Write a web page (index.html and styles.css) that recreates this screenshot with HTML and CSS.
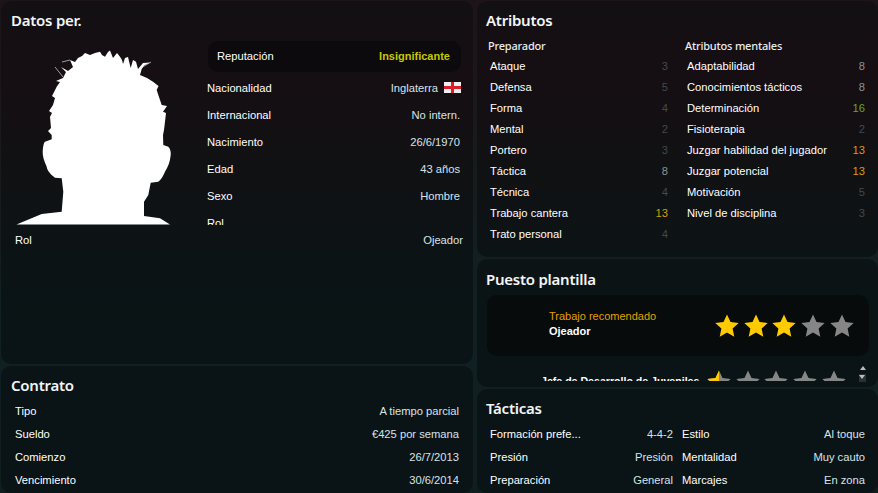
FILE: index.html
```html
<!DOCTYPE html>
<html lang="es">
<head>
  <meta charset="UTF-8" />
  <title>Perfil del empleado</title>
  <link rel="stylesheet" href="styles.css">
</head>
<body>
  <div class="column column-left">
    <section class="panel panel-personal">
      <h2>Datos per.</h2>
      <div class="personal-body">
        <svg class="silhouette" viewBox="10 44 170 181" aria-hidden="true">
          <path fill="#fff" d="M16.5 224.5 L41.7 214 L61.7 211.7 L63.3 191.7 L61.7 178.3 L55 177.7 C50 174 47 170 46.7 166.7 C44 161 42.5 156 42.7 151.7 C43 146 44 142 45 141.7 L51.7 139.3 L51.7 135 L48 131 L51 128 L50 116.7 L52 113 L49 111 L53 105 L55 98 L52 96 L56.7 86.7 L60 82 L56 81 L63 78 L66 72 L61 67 L68 71 L73 67 L70 60 L75 62 L78 58 L82 56 L85 53 L90 55 L95 53 L100 51.7 L102 55 L105 56.7 L108 52 L110 50.5 L113 58 L117 53 L120 56.7 L122 60 L123 64 L125 58 L128 57 L130.7 68 L133 60 L136 61.7 L138 69 L143 63 L150 62.5 L144 65.5 L141.7 69 L140 75 L147 78 L153 81.7 L158.5 86 L156.7 90 L159 97 L161.7 105 L167 106 L163 111.7 L166 113 L165 121.7 L164 130 L163 135 L163.3 145 L168.3 146.7 C170.5 149 171 152 170.7 155 C170 162 168 167 165 171.7 C163 176 161 180 158.3 181.7 L150.7 182.7 L148.3 195 L144 201.7 L144 216 L160 218.3 L170 224.5 Z"/>
          <path fill="none" stroke="#fff" stroke-width=".6" d="M63 77 L55 67 M70 60 L62 62 M141 68 L151 62"/>
        </svg>
        <div class="personal-list">
          <div class="row row-highlight"><span>Reputación</span><b class="rep">Insignificante</b></div>
          <div class="row"><span>Nacionalidad</span><span class="val nation">Inglaterra
            <svg class="flag" viewBox="0 0 17 11" aria-hidden="true">
              <rect width="17" height="11" fill="#eee"/>
              <rect x="7" width="3" height="11" fill="#d8202c"/>
              <rect y="4" width="17" height="3" fill="#d8202c"/>
            </svg></span></div>
          <div class="row"><span>Internacional</span><span class="val">No intern.</span></div>
          <div class="row"><span>Nacimiento</span><span class="val">26/6/1970</span></div>
          <div class="row"><span>Edad</span><span class="val">43 años</span></div>
          <div class="row"><span>Sexo</span><span class="val">Hombre</span></div>
          <div class="row"><span>Rol</span></div>
        </div>
      </div>
      <div class="row row-role"><span>Rol</span><span class="val">Ojeador</span></div>
    </section>

    <section class="panel panel-contract">
      <h2>Contrato</h2>
      <div class="row"><span>Tipo</span><span class="val">A tiempo parcial</span></div>
      <div class="row"><span>Sueldo</span><span class="val">€425 por semana</span></div>
      <div class="row"><span>Comienzo</span><span class="val">26/7/2013</span></div>
      <div class="row"><span>Vencimiento</span><span class="val">30/6/2014</span></div>
    </section>
  </div>

  <div class="column column-right">
    <section class="panel panel-attrs">
      <h2>Atributos</h2>
      <div class="attrs">
        <div class="attr-col">
          <h3>Preparador</h3>
          <div class="row"><span>Ataque</span><span class="low">3</span></div>
          <div class="row"><span>Defensa</span><span class="low">5</span></div>
          <div class="row"><span>Forma</span><span class="low">4</span></div>
          <div class="row"><span>Mental</span><span class="low">2</span></div>
          <div class="row"><span>Portero</span><span class="low">3</span></div>
          <div class="row"><span>Táctica</span><span class="mid">8</span></div>
          <div class="row"><span>Técnica</span><span class="low">4</span></div>
          <div class="row"><span>Trabajo cantera</span><span class="good">13</span></div>
          <div class="row"><span>Trato personal</span><span class="low">4</span></div>
        </div>
        <div class="attr-col">
          <h3>Atributos mentales</h3>
          <div class="row"><span>Adaptabilidad</span><span class="mid">8</span></div>
          <div class="row"><span>Conocimientos tácticos</span><span class="mid">8</span></div>
          <div class="row"><span>Determinación</span><span class="great">16</span></div>
          <div class="row"><span>Fisioterapia</span><span class="low">2</span></div>
          <div class="row"><span>Juzgar habilidad del jugador</span><span class="good">13</span></div>
          <div class="row"><span>Juzgar potencial</span><span class="good">13</span></div>
          <div class="row"><span>Motivación</span><span class="low">5</span></div>
          <div class="row"><span>Nivel de disciplina</span><span class="low">3</span></div>
        </div>
      </div>
    </section>

    <section class="panel panel-squad">
      <h2>Puesto plantilla</h2>
      <div class="job-card">
        <div class="job-text">
          <div class="job-label">Trabajo recomendado</div>
          <div class="job-name">Ojeador</div>
        </div>
        <div class="stars">
          <svg class="star on" viewBox="0 0 24 24"><path d="M12 .5l3.5 7.6 8.2.9-6.1 5.6 1.7 8.1-7.3-4.1-7.3 4.1 1.7-8.1L.3 9l8.2-.9z"/></svg>
          <svg class="star on" viewBox="0 0 24 24"><path d="M12 .5l3.5 7.6 8.2.9-6.1 5.6 1.7 8.1-7.3-4.1-7.3 4.1 1.7-8.1L.3 9l8.2-.9z"/></svg>
          <svg class="star on" viewBox="0 0 24 24"><path d="M12 .5l3.5 7.6 8.2.9-6.1 5.6 1.7 8.1-7.3-4.1-7.3 4.1 1.7-8.1L.3 9l8.2-.9z"/></svg>
          <svg class="star" viewBox="0 0 24 24"><path d="M12 .5l3.5 7.6 8.2.9-6.1 5.6 1.7 8.1-7.3-4.1-7.3 4.1 1.7-8.1L.3 9l8.2-.9z"/></svg>
          <svg class="star" viewBox="0 0 24 24"><path d="M12 .5l3.5 7.6 8.2.9-6.1 5.6 1.7 8.1-7.3-4.1-7.3 4.1 1.7-8.1L.3 9l8.2-.9z"/></svg>
        </div>
      </div>
      <div class="job-more">
        <div class="job-clip">
          <div class="job-other">Jefe de Desarrollo de Juveniles</div>
          <div class="stars">
            <svg class="star" viewBox="0 0 24 24"><path d="M12 .5l3.5 7.6 8.2.9-6.1 5.6 1.7 8.1-7.3-4.1-7.3 4.1 1.7-8.1L.3 9l8.2-.9z"/><path class="half-fill" d="M12 .5v17.6l-7.3 4.1 1.7-8.1L.3 9l8.2-.9z"/></svg>
            <svg class="star" viewBox="0 0 24 24"><path d="M12 .5l3.5 7.6 8.2.9-6.1 5.6 1.7 8.1-7.3-4.1-7.3 4.1 1.7-8.1L.3 9l8.2-.9z"/></svg>
            <svg class="star" viewBox="0 0 24 24"><path d="M12 .5l3.5 7.6 8.2.9-6.1 5.6 1.7 8.1-7.3-4.1-7.3 4.1 1.7-8.1L.3 9l8.2-.9z"/></svg>
            <svg class="star" viewBox="0 0 24 24"><path d="M12 .5l3.5 7.6 8.2.9-6.1 5.6 1.7 8.1-7.3-4.1-7.3 4.1 1.7-8.1L.3 9l8.2-.9z"/></svg>
            <svg class="star" viewBox="0 0 24 24"><path d="M12 .5l3.5 7.6 8.2.9-6.1 5.6 1.7 8.1-7.3-4.1-7.3 4.1 1.7-8.1L.3 9l8.2-.9z"/></svg>
          </div>
        </div>
        <div class="scroller"><i class="arrow-up"></i><i class="arrow-down"></i></div>
      </div>
    </section>

    <section class="panel panel-tactics">
      <h2>Tácticas</h2>
      <div class="tactics">
        <div class="row"><span>Formación prefe...</span><span class="val">4-4-2</span></div>
        <div class="row"><span>Estilo</span><span class="val">Al toque</span></div>
        <div class="row"><span>Presión</span><span class="val">Presión</span></div>
        <div class="row"><span>Mentalidad</span><span class="val">Muy cauto</span></div>
        <div class="row"><span>Preparación</span><span class="val">General</span></div>
        <div class="row"><span>Marcajes</span><span class="val">En zona</span></div>
      </div>
    </section>
  </div>
</body>
</html>
```
FILE: styles.css
```css
* {
  box-sizing: border-box;
}

html, body {
  height: 100%;
}

body {
  margin: 0;
  padding: 1px 0 0 1px;
  width: 878px;
  height: 493px;
  overflow: hidden;
  display: flex;
  gap: 4px;
  background: linear-gradient(180deg, #1c1418 0%, #181a1c 30%, #112022 60%, #101e20 100%);
  color: #fff;
  font-family: "Liberation Sans", Arial, sans-serif;
  font-size: 11.2px;
}

.column {
  display: flex;
  flex-direction: column;
  gap: 2px;
  height: 100%;
}

.column-left {
  width: 472px;
}

.column-right {
  width: 401px;
}

.panel {
  background: linear-gradient(180deg, #121013 0%, #160e12 14%, #0f1214 40%, #0a1415 62%, #0a1316 100%) fixed;
  border-radius: 10px;
  overflow: hidden;
}

h2 {
  margin: 0;
  font-family: "Noto Sans", sans-serif;
  font-size: 15px;
  font-weight: 600;
  letter-spacing: -0.25px;
  line-height: 20px;
  color: #f2f6f8;
}

h3 {
  margin: 0;
  font-family: "Noto Sans", sans-serif;
  font-size: 11px;
  font-weight: 500;
  letter-spacing: -0.2px;
  line-height: 18px;
  color: #e8ecee;
}

.row {
  display: flex;
  justify-content: space-between;
  align-items: center;
  white-space: nowrap;
}

.val {
  color: #d7e3ea;
}

/* datos personales */
.panel-personal {
  height: 363px;
  padding: 9px 10px 0;
}

.personal-body {
  display: flex;
  height: 194px;
  margin-top: 1px;
  padding-top: 10px;
  overflow: hidden;
}

.silhouette {
  flex: none;
  align-self: flex-end;
  width: 170px;
  height: 181px;
  margin-left: -1px;
  filter: blur(0.3px);
}

.personal-list {
  flex: 1;
  margin-left: 27px;
  padding-right: 3px;
}

.personal-list .row {
  height: 27px;
}

.personal-list .row-highlight {
  height: 31px;
  margin: 0 -1px 2px 1px;
  padding: 0 11px 2px 9px;
  background: #0c0a0c;
  border-radius: 10px;
}

.rep {
  font-size: 11px;
  color: #c4c800;
}

.nation {
  display: flex;
  align-items: center;
  gap: 6px;
}

.flag {
  width: 17px;
  height: 11px;
  margin-right: -1px;
}

.row-role {
  height: 30px;
  padding-left: 4px;
}

/* contrato */
.panel-contract {
  flex: 1;
  padding: 9px 14px 0 10px;
}

.panel-contract h2 {
  margin-bottom: 4px;
}

.panel-contract .row {
  height: 23px;
  padding-left: 4px;
}

/* atributos */
.panel-attrs {
  height: 256px;
  padding: 9px 9px 0;
}

.attrs {
  display: flex;
  gap: 17px;
  margin: 7px 0 0 2px;
}

.attr-col {
  width: 180px;
}

.attr-col .row {
  height: 21px;
  padding-left: 2px;
}

.low {
  color: #43494c;
}

.mid {
  color: #8b9296;
}

.good {
  color: #d69b08;
}

.great {
  color: #6aa81a;
}

/* puesto plantilla */
.panel-squad {
  height: 128px;
  padding: 10px 9px 0;
}

.job-card {
  display: flex;
  align-items: center;
  height: 61px;
  margin: 6px 0 0 1px;
  padding-left: 62px;
  background: #080b0c;
  border-radius: 10px;
}

.job-text {
  width: 166px;
  padding-bottom: 4px;
}

.job-label {
  font-size: 11px;
  color: #e0a000;
  line-height: 15px;
}

.job-name {
  font-size: 11px;
  font-weight: bold;
  line-height: 15px;
}

.stars {
  display: flex;
  gap: 4.7px;
}

.star {
  flex: none;
  width: 24px;
  height: 24px;
  fill: #868686;
}

.star.on,
.half-fill {
  fill: #ffcb00;
}

.job-more {
  display: flex;
  padding-top: 14px;
}

.job-clip {
  display: flex;
  align-items: flex-start;
  width: 361px;
  height: 11px;
  padding-left: 55px;
  overflow: hidden;
}

.job-other {
  flex: none;
  width: 166px;
  padding-top: 5px;
  font-size: 10.6px;
  font-weight: bold;
  white-space: nowrap;
}

.scroller {
  display: flex;
  flex-direction: column;
  align-items: center;
  gap: 4px;
  width: 7px;
  margin: -4px 0 0 12px;
}

.arrow-up {
  width: 0;
  height: 0;
  border: 3.5px solid transparent;
  border-top: 0;
  border-bottom: 4px solid #b9bdbf;
}

.arrow-down {
  display: block;
  width: 7px;
  height: 8px;
  background: #2b3133;
  position: relative;
}

.arrow-down::before {
  content: "";
  position: absolute;
  left: 0;
  top: 1px;
  border: 3.5px solid transparent;
  border-bottom: 0;
  border-top: 4px solid #b9bdbf;
}

/* tacticas */
.panel-tactics {
  flex: 1;
  padding: 9px 9px 0;
}

.tactics {
  display: grid;
  grid-template-columns: 183px 183px;
  column-gap: 9px;
  margin-top: 4px;
  padding-left: 4px;
}

.tactics .row {
  height: 23px;
}
```
